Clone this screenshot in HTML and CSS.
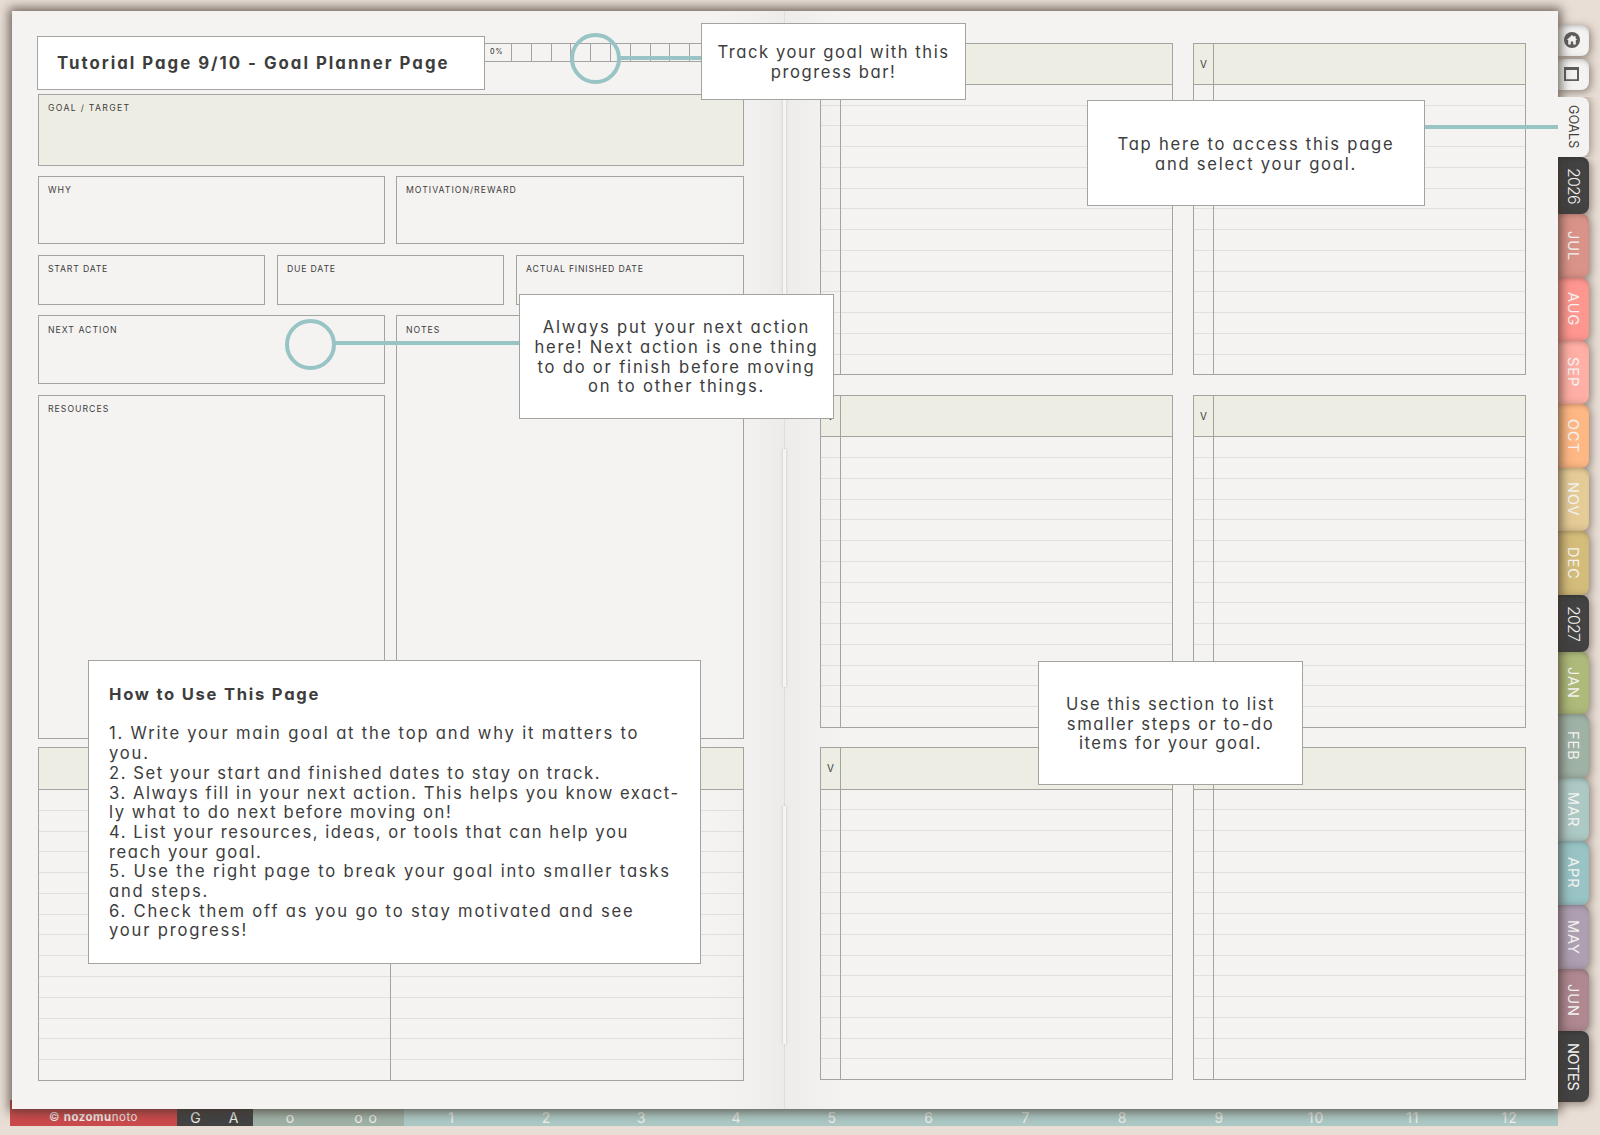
FILE: index.html
```html
<!DOCTYPE html>
<html lang="en">
<head>
  <meta charset="UTF-8" />
  <title>Goal Planner Page</title>
  <meta name="viewport" content="width=device-width, initial-scale=1.0" />
  <link rel="stylesheet" href="styles.css">
</head>
<body>
  <div class="planner">
    <main class="spread">
      <section class="page left">
        <div class="progress">
          <span>0%</span><i></i><i></i><i></i><i></i><i></i><i></i><i></i><i></i><i></i><i></i><span></span>
        </div>
        <div class="box goal">Goal / Target</div>
        <div class="row row-why">
          <div class="box">Why</div>
          <div class="box">Motivation/Reward</div>
        </div>
        <div class="row row-dates">
          <div class="box">Start Date</div>
          <div class="box">Due Date</div>
          <div class="box">Actual Finished Date</div>
        </div>
        <div class="work">
          <div class="box">Next Action</div>
          <div class="box notes">Notes</div>
          <div class="box">Resources</div>
        </div>
        <div class="list split"><div class="list-head"></div></div>
      </section>

      <section class="page right">
        <div class="list check"><div class="list-head"></div></div>
        <div class="list check"><div class="list-head">V</div></div>
        <div class="list check"><div class="list-head">V</div></div>
        <div class="list check"><div class="list-head">V</div></div>
        <div class="list check"><div class="list-head">V</div></div>
        <div class="list check"><div class="list-head"></div></div>
      </section>

      <div class="spine"><b></b><b></b><b></b></div>
    </main>

    <nav class="tabs">
      <a class="tab icon home">
        <svg width="16" height="16" viewBox="0 0 16 16"><circle cx="8" cy="8" r="8" fill="#5e5e5e"/><path d="M8 3 2.7 8h1.5v4.4h2.6V9.4h2.4v3h2.6V8h1.5L11.6 6.4V4h-1.4v1.1z" fill="#f4f3f1"/></svg>
      </a>
      <a class="tab icon square">
        <svg width="15" height="14" viewBox="0 0 15 14"><path d="M0 0h15v14H0zM2 3V12.2h11V3z" fill="#5e5e5e" fill-rule="evenodd"/></svg>
      </a>
      <a class="tab goals">GOALS</a>
      <a class="tab year">2026</a>
      <a class="tab jul">JUL</a>
      <a class="tab aug">AUG</a>
      <a class="tab sep">SEP</a>
      <a class="tab oct">OCT</a>
      <a class="tab nov">NOV</a>
      <a class="tab dec">DEC</a>
      <a class="tab year">2027</a>
      <a class="tab jan">JAN</a>
      <a class="tab feb">FEB</a>
      <a class="tab mar">MAR</a>
      <a class="tab apr">APR</a>
      <a class="tab may">MAY</a>
      <a class="tab jun">JUN</a>
      <a class="tab end">NOTES</a>
    </nav>

    <footer class="strip">
      <span class="brand">©&nbsp;<b>nozomu</b>noto</span>
      <span class="dark">G</span><span class="dark">A</span>
      <span class="sage">o</span><span class="sage">o o</span>
      <span>1</span><span>2</span><span>3</span><span>4</span><span>5</span><span>6</span>
      <span>7</span><span>8</span><span>9</span><span>10</span><span>11</span><span>12</span>
    </footer>

    <!-- tutorial overlay -->
    <div class="line line-progress"></div>
    <div class="line line-tab"></div>
    <div class="line line-next"></div>
    <div class="ring ring-progress"></div>
    <div class="ring ring-next"></div>

    <h1 class="note title">Tutorial Page 9/10 - Goal Planner Page</h1>
    <div class="note tip-progress">Track your goal with this<br>progress bar!</div>
    <div class="note tip-tab">Tap here to access this page<br>and select your goal.</div>
    <div class="note tip-next">Always put your next action<br>here! Next action is one thing<br>to do or finish before moving<br>on to other things.</div>
    <div class="note tip-steps">Use this section to list<br>smaller steps or to-do<br>items for your goal.</div>
    <div class="note howto">
      <h2>How to Use This Page</h2>
      <p class="wide">1. Write your main goal at the top and why it matters to<br>you.</p>
      <p>2. Set your start and finished dates to stay on track.</p>
      <p>3. Always fill in your next action. This helps you know exact-<br>ly what to do next before moving on!</p>
      <p>4. List your resources, ideas, or tools that can help you<br>reach your goal.</p>
      <p class="wide">5. Use the right page to break your goal into smaller tasks<br>and steps.</p>
      <p class="wide">6. Check them off as you go to stay motivated and see<br>your progress!</p>
    </div>
  </div>

  <script>
    // 14 ruled rows under every list header
    document.querySelectorAll(".list").forEach(list => {
      for (let i = 0; i < 14; i++) {
        const row = document.createElement("div");
        row.className = "rule";
        list.appendChild(row);
      }
    });
  </script>
</body>
</html>
```
FILE: styles.css
```css
* {
  box-sizing: border-box;
}

body {
  margin: 0;
  background: #e8ded5;
  font-family: Inter, Lato, sans-serif;
  font-feature-settings: "cv11";
  color: #3d3d3d;
}

.planner {
  position: relative;
  width: 1600px;
  height: 1135px;
  padding: 11px 0 0 12px;
  display: grid;
  grid-template-columns: 1546px 31px;
  grid-template-rows: 1098px 17px;
  overflow: hidden;
}

/* open book */
.spread {
  position: relative;
  z-index: 2;
  display: grid;
  grid-template-columns: 773px 773px;
  background: #f4f3f1;
  box-shadow: 0 0 10px 3px rgba(62, 50, 42, .72);
}

.left {
  display: flex;
  flex-direction: column;
  padding: 32px 41px 0 26px;
  background: linear-gradient(to left, #ecebe9, #f1f0ee 30px, #f4f3f1 70px);
}

.right {
  padding: 31.5px 0 0 35px;
  display: grid;
  grid-template-columns: 353px 333px;
  grid-template-rows: repeat(3, 332.9px);
  gap: 19.5px 20px;
  background: linear-gradient(to right, #edecea, #f1f0ee 30px, #f4f3f1 60px);
}

.spine {
  position: absolute;
  top: 0;
  bottom: 0;
  left: 770px;
  width: 5px;
  padding-top: 81px;
  display: flex;
  flex-direction: column;
  gap: 119px;
  background: linear-gradient(to right, transparent 2px, #deddda 2px, #deddda 3px, transparent 3px);
}

.spine b {
  height: 238px;
  margin: 0 1px;
  background: #f6f5f3;
  box-shadow: 0 0 3px #c2c0bd;
}

/* left page */
.progress {
  display: flex;
  width: 706px;
  height: 19px;
  margin-bottom: 32px;
  padding-left: 437px;
  font-size: 7px;
  font-weight: 500;
  line-height: 16px;
  letter-spacing: 1px;
}

.progress span,
.progress i {
  width: 20px;
  border: 1px solid #a3a3a0;
  border-left: 0;
}

.progress i {
  width: 19.8px;
}

.progress span:first-child {
  width: 37px;
  padding-left: 15px;
}

.progress span:last-child {
  flex: 1;
}

.box {
  padding: 7px 9px;
  border: 1px solid #a3a3a0;
  background: rgba(244, 243, 241, .5);
  font-size: 8.7px;
  line-height: 12px;
  letter-spacing: 1px;
  text-transform: uppercase;
}

.goal {
  height: 72px;
  margin-bottom: 10px;
  background: #edede4;
  letter-spacing: 1.3px;
}

.row {
  display: grid;
}

.row-why {
  grid-template-columns: 347px 1fr;
  gap: 11px;
  height: 68px;
  margin-bottom: 11px;
}

.row-dates {
  grid-template-columns: 227px 227px 1fr;
  gap: 12px;
  height: 50px;
  margin-bottom: 10px;
}

.row-dates .box {
  letter-spacing: .8px;
}

.work {
  display: grid;
  grid-template-columns: 347px 1fr;
  grid-template-rows: 69px 344px;
  gap: 11px;
  margin-bottom: 8px;
}

.work .box {
  padding-top: 8px;
}

.work .box:last-child {
  padding-top: 7px;
}

.notes {
  grid-row: span 2;
}

/* ruled lists */
.list {
  position: relative;
  display: flex;
  flex-direction: column;
  border: 1px solid #a3a3a0;
}

.split {
  height: 334px;
}

.list-head {
  height: 42px;
  border-bottom: 1px solid #a3a3a0;
  background: #edede4;
  font-size: 10px;
  line-height: 40px;
}

.check .list-head {
  height: 41.4px;
  padding-left: 6px;
}

.rule {
  flex: 1;
  border-bottom: 1px solid #dfdfdd;
}

.rule:last-child {
  border-bottom: 0;
}

.list::after {
  content: "";
  position: absolute;
  top: 0;
  bottom: 0;
  left: 19px;
  border-left: 1px solid #a3a3a0;
}

.split::after {
  top: 42px;
  left: 351px;
}

/* side tabs */
.tabs {
  padding-top: 14px;
}

.tab {
  display: flex;
  align-items: center;
  justify-content: center;
  width: 31px;
  height: 63px;
  border-radius: 0 8px 8px 0;
  writing-mode: vertical-rl;
  font-size: 14.5px;
  letter-spacing: 1px;
  color: #f4f3f1;
  box-shadow: 2px 2px 8px rgba(70, 55, 45, .55), inset 0 4px 5px -3px rgba(0, 0, 0, .25);
}

.icon {
  height: 31px;
  margin-bottom: 3px;
  padding: 0 4px 2px 0;
  background: #f4f3f1;
}

.square {
  margin-bottom: 7px;
}

/* open tab: sits above the book's shadow and joins the page */
.goals {
  position: relative;
  z-index: 3;
  height: 60px;
  background: #f4f3f1;
  color: #3d3d3d;
  font-size: 12.5px;
  letter-spacing: .3px;
  box-shadow: 2px 0 8px rgba(70, 55, 45, .45);
  clip-path: inset(0 -11px 0 0);
}

.year { height: 57px; background: #434343; font-size: 16px; font-weight: 300; letter-spacing: -.8px; }
.jul { height: 64px; background: #da9388; }
.aug { background: #ff9790; }
.sep { background: #ffafa5; }
.oct { height: 64px; background: #ffb884; }
.nov { background: #e5cb96; }
.dec { height: 64px; background: #d4bc7a; }
.jan { height: 62px; background: #adba79; }
.feb { height: 64px; background: #9fb2a6; }
.mar { background: #adc9c5; }
.apr { height: 64px; background: #98c4c6; }
.may { height: 64px; background: #ae9fb2; }
.jun { height: 62px; background: #af8892; }
.end { height: 71px; background: #434343; letter-spacing: -.3px; }

/* bottom strip */
.strip {
  grid-column: 1;
  margin: -9px 0 0 -2px;
  display: grid;
  grid-template-columns: 167px 38px 38px 75px 76px repeat(4, 95px) repeat(8, 1fr);
  background: #adc9c5;
  font-size: 14px;
  line-height: 17px;
  text-align: center;
  letter-spacing: 1px;
  color: #eeeeea;
}

.strip span {
  padding-top: 9px;
}

.strip .brand {
  background: #cb4a4c;
  font-size: 11.5px;
  letter-spacing: .5px;
}

.strip .dark {
  background: #434343;
}

.strip .sage {
  background: #9fb2a6;
}

/* tutorial notes */
.note {
  position: absolute;
  z-index: 5;
  display: flex;
  flex-direction: column;
  justify-content: center;
  margin: 0;
  padding-top: 2px;
  border: 1px solid #a3a3a0;
  background: #fff;
  font-size: 16.6px;
  line-height: 19.7px;
  letter-spacing: 1.55px;
  text-align: center;
}

.note.title {
  left: 37px;
  top: 36px;
  width: 448px;
  height: 54px;
  padding-left: 19px;
  font-size: 16.8px;
  font-weight: 700;
  letter-spacing: 2px;
  text-align: left;
}

.tip-progress {
  left: 701px;
  top: 23px;
  width: 265px;
  height: 77px;
}

.tip-tab {
  left: 1087px;
  top: 100px;
  width: 338px;
  height: 106px;
  padding-top: 3px;
  letter-spacing: 1.75px;
}

.tip-next {
  left: 519px;
  top: 294px;
  width: 315px;
  height: 125px;
  letter-spacing: 1.8px;
}

.tip-steps {
  left: 1038px;
  top: 661px;
  width: 265px;
  height: 124px;
  padding-top: 3px;
}

.note.howto {
  display: block;
  left: 88px;
  top: 660px;
  width: 613px;
  height: 304px;
  padding: 24px 0 0 20px;
  text-align: left;
  white-space: nowrap;
}

.howto h2 {
  margin: 0 0 19.7px;
  font-size: inherit;
  font-weight: 700;
  letter-spacing: 1.75px;
}

.howto p {
  margin: 0;
}

.howto .wide {
  letter-spacing: 1.8px;
}

.line {
  position: absolute;
  z-index: 4;
  height: 4px;
  background: #98c4c6;
}

.line-progress { left: 620px; top: 56px; width: 82px; }
.line-tab { left: 1424px; top: 125px; width: 134px; }
.line-next { left: 334px; top: 341px; width: 186px; }

.ring {
  position: absolute;
  z-index: 4;
  width: 51px;
  height: 51px;
  border: 4px solid #98c4c6;
  border-radius: 50%;
}

.ring-progress { left: 570px; top: 33px; }
.ring-next { left: 285px; top: 319px; }
```
